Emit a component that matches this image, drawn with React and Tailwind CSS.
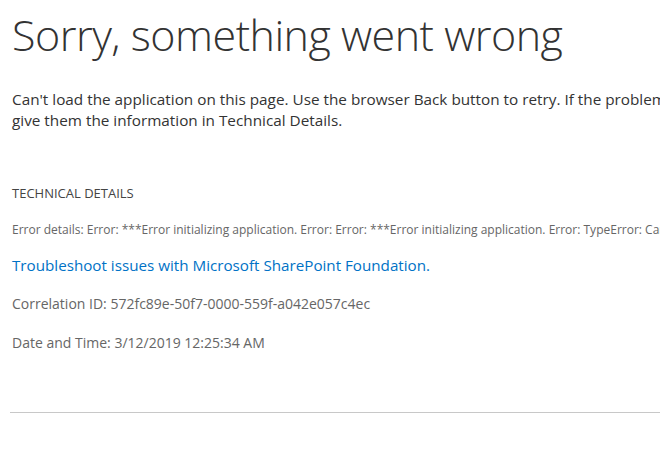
import React from 'react';

export default function App() {
  return (
    <div className="w-[660px] h-[451px] overflow-hidden bg-white font-['Open_Sans',sans-serif]">
      <div className="w-[1100px] pl-[12px]">
        <h1 className="text-[43px] font-light leading-[60px] text-[#333333] pt-[5px] tracking-[-0.5px]">
          Sorry, something went wrong
        </h1>
        <div className="mt-[24px] text-[15.3px] leading-[21px] text-[#333333]">
          <div className="whitespace-nowrap">
            Can't load the application on this page. Use the browser Back button to retry. If the problem persists, contact the administrator for the site and
          </div>
          <div className="whitespace-nowrap">give them the information in Technical Details.</div>
        </div>
        <div className="mt-[53px] text-[13px] text-[#444444] leading-[18px]">TECHNICAL DETAILS</div>
        <div className="mt-[20px] text-[12px] text-[#666666] leading-[16px] whitespace-nowrap">
          Error details: Error: ***Error initializing application. Error: Error: ***Error initializing application. Error: TypeError: Cannot read property 'get_current' of undefined
        </div>
        <div className="mt-[17px] text-[15.2px] leading-[21px]">
          <a href="#" className="text-[#0072c6]">Troubleshoot issues with Microsoft SharePoint Foundation.</a>
        </div>
        <div className="mt-[18px] text-[14px] text-[#666666] leading-[20px]">
          Correlation ID: 572fc89e-50f7-0000-559f-a042e057c4ec
        </div>
        <div className="mt-[19px] text-[14px] text-[#666666] leading-[20px]">
          Date and Time: 3/12/2019 12:25:34 AM
        </div>
      </div>
      <div className="ml-[10px] mt-[59px] border-t border-[#c8c8c8]" />
    </div>
  );
}
